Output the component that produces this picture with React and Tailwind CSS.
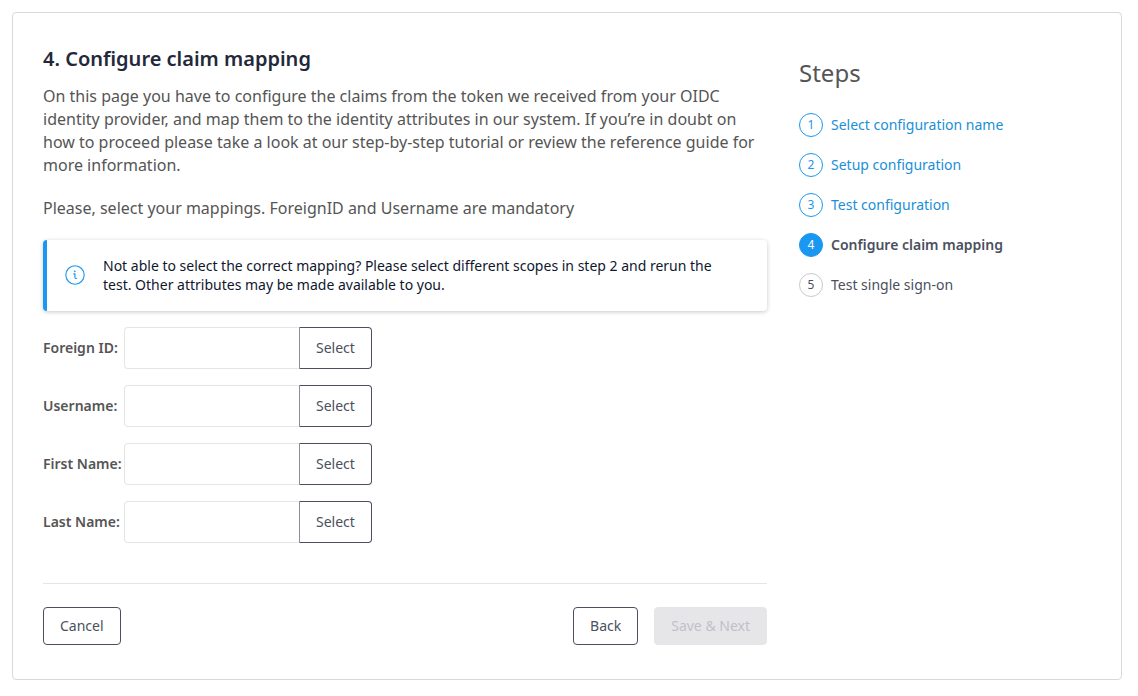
import React from 'react';

const fields = [
  { id: 'foreign-id', label: 'Foreign ID:' },
  { id: 'username', label: 'Username:' },
  { id: 'first-name', label: 'First Name:' },
  { id: 'last-name', label: 'Last Name:' },
];

const steps = [
  { label: 'Select configuration name', state: 'done' },
  { label: 'Setup configuration', state: 'done' },
  { label: 'Test configuration', state: 'done' },
  { label: 'Configure claim mapping', state: 'current' },
  { label: 'Test single sign-on', state: 'todo' },
];

const circleStyles = {
  done: 'border-[#1a97f0] text-[#1a97f0]',
  current: 'border-[#1a97f0] bg-[#1a97f0] text-white',
  todo: 'border-[#c9c9cc] text-[#4b4f5e]',
};

function InfoIcon() {
  return (
    <svg className="size-5 shrink-0 text-[#1a97f0]" viewBox="0 0 20 20" fill="none" stroke="currentColor" aria-hidden="true">
      <circle cx="10" cy="10" r="9.2" strokeWidth="1.1" />
      <path d="M8.3 8.9h1.6v3.4q0 1.2 1.1 1.2h1.1" strokeWidth="1.2" />
      <circle cx="9.8" cy="6.3" r="0.9" fill="currentColor" stroke="none" />
    </svg>
  );
}

function Alert({ children }) {
  return (
    <div role="note" className="mt-5 flex items-center gap-4 rounded-[4px] border-l-4 border-[#1a97f0] bg-white pt-4 pr-10 pb-[17px] pl-4 shadow-[0_1px_4px_rgba(0,0,0,0.22)]">
      <div className="flex w-6 shrink-0 justify-center">
        <InfoIcon />
      </div>
      <p className="text-sm leading-[19px] text-[#0f172e]">{children}</p>
    </div>
  );
}

function MappingRow({ id, label }) {
  return (
    <div className="flex items-center">
      <label htmlFor={id} className="w-[81px] shrink-0 text-sm font-semibold whitespace-nowrap text-[#555555]">
        {label}
      </label>
      <input id={id} type="text" className="h-[42px] w-[176px] rounded-l-[4px] border border-r-0 border-[#e5e5e7] bg-white px-3 text-sm outline-none" />
      <button type="button" aria-label={'Select ' + label} className="-ml-px h-[42px] rounded-r-[4px] border border-[#4b4f5e] border-l-[#8b8d98] bg-white px-4 text-sm text-[#4b4f5e]">
        Select
      </button>
    </div>
  );
}

function StepLabel({ step }) {
  if (step.state === 'done') {
    return <a href="#" className="text-[#1a8fd8]">{step.label}</a>;
  }
  return <span className={step.state === 'current' ? 'font-semibold' : ''}>{step.label}</span>;
}

export default function App() {
  return (
    <div className="min-h-screen bg-white pt-3 pr-4 pb-4 pl-3 font-['Noto_Sans',sans-serif] text-[#555555]">
      <main className="grid grid-cols-[minmax(0,1fr)_292px] gap-8 rounded-[4px] border border-[#d8d8da] px-[30px] pt-[34px] pb-[34px]">
        <section>
          <h1 className="text-xl leading-6 font-semibold text-[#23283a]">4. Configure claim mapping</h1>
          <p className="mt-3.5 text-base leading-[23px]">
            On this page you have to configure the claims from the token we received from your OIDC identity provider, and
            map them to the identity attributes in our system. If you’re in doubt on how to proceed please take a look at
            our step-by-step tutorial or review the reference guide for more information.
          </p>
          <p className="mt-5 text-base leading-[23px]">Please, select your mappings. ForeignID and Username are mandatory</p>
          <Alert>
            Not able to select the correct mapping? Please select different scopes in step 2 and rerun the test. Other
            attributes may be made available to you.
          </Alert>
          <form onSubmit={(e) => e.preventDefault()}>
            <div className="mt-4 flex flex-col gap-4">
              {fields.map((f) => (
                <MappingRow key={f.id} id={f.id} label={f.label} />
              ))}
            </div>
            <div className="mt-10 flex items-center gap-4 border-t border-[#e5e5e7] pt-[23px] text-sm text-[#4b4f5e]">
              <button type="button" className="mr-auto h-[38px] rounded-[4px] border border-[#4b4f5e] px-4">Cancel</button>
              <button type="button" className="h-[38px] rounded-[4px] border border-[#4b4f5e] px-4">Back</button>
              <button type="submit" disabled className="h-[38px] rounded-[4px] border border-[#e6e6e8] bg-[#e6e6e8] px-4 text-[#c0c1c8]">
                Save &amp; Next
              </button>
            </div>
          </form>
        </section>
        <aside>
          <h2 className="mt-2.5 text-2xl leading-8">Steps</h2>
          <ol className="mt-6 flex flex-col gap-4 text-sm leading-6 text-[#4b4f5e]">
            {steps.map((step, i) => (
              <li key={step.label} className="flex items-center gap-2">
                <span className={'flex size-6 items-center justify-center rounded-full border text-xs ' + circleStyles[step.state]}>
                  {i + 1}
                </span>
                <StepLabel step={step} />
              </li>
            ))}
          </ol>
        </aside>
      </main>
    </div>
  );
}
